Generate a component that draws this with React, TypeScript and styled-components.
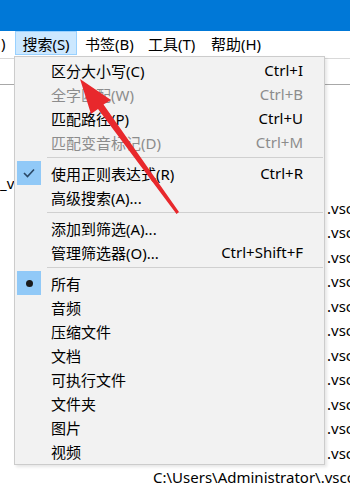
import styled, { createGlobalStyle } from 'styled-components';

const GlobalStyle = createGlobalStyle`
  html, body {
    margin: 0;
    padding: 0;
    background: #ffffff;
    overflow: hidden;
  }
  body {
    font-family: "Noto Sans", "Noto Sans CJK SC", sans-serif;
  }
`;

const Page = styled.div`
  position: relative;
  width: 350px;
  height: 486px;
  overflow: hidden;
  background: #ffffff;
  display: flex;
  flex-direction: column;
`;

const TitleBar = styled.div`
  height: 31px;
  flex-shrink: 0;
  background: #0078d7;
`;

const MenuBar = styled.div`
  height: 24px;
  flex-shrink: 0;
  display: flex;
  align-items: stretch;
  background: #ffffff;
  font-size: 15px;
  color: #000;
`;

const MenuBarItem = styled.div<{ $open?: boolean; $w: number; $pad?: number }>`
  width: ${p => p.$w}px;
  flex-shrink: 0;
  box-sizing: border-box;
  display: flex;
  align-items: center;
  justify-content: ${p => (p.$open ? 'center' : 'flex-start')};
  padding-left: ${p => (p.$open ? 0 : p.$pad ?? 7)}px;
  white-space: nowrap;
  background: ${p => (p.$open ? '#cce8ff' : 'transparent')};
  border: 1px solid ${p => (p.$open ? '#99d1ff' : 'transparent')};
`;

const SearchStrip = styled.div`
  margin-top: 3px;
  height: 25px;
  flex-shrink: 0;
  border-top: 1px solid #d9d9d9;
  border-bottom: 1px solid #a8a8a8;
`;

const List = styled.div`
  padding-top: 86px;
  display: flex;
  flex-direction: column;
`;

const Row = styled.div`
  height: 24.5px;
  display: flex;
  align-items: center;
  font-size: 15px;
  color: #000;
  white-space: nowrap;
`;

const NameCell = styled.div`
  width: 153px;
  flex-shrink: 0;
  overflow: hidden;
`;

const PathCell = styled.div`
  flex: 1;
  overflow: hidden;
  display: flex;
`;

const Hidden = styled.span<{ $w: number }>`
  display: inline-block;
  width: ${p => p.$w}px;
  flex-shrink: 0;
  overflow: hidden;
  clip-path: inset(0 8px 0 0);
`;

const Dropdown = styled.div`
  position: absolute;
  left: 14px;
  top: 56px;
  width: 311px;
  box-sizing: border-box;
  padding: 1px 0 1px 0;
  background: #f2f2f2;
  border: 1px solid #cccccc;
  box-shadow: 2px 2px 3px rgba(0, 0, 0, 0.1);
  font-size: 15px;
  display: flex;
  flex-direction: column;
`;

const Item = styled.div<{ $disabled?: boolean }>`
  height: 24px;
  display: flex;
  align-items: center;
  padding: 0 21px 0 2px;
  color: ${p => (p.$disabled ? '#8c8c8c' : '#000000')};
  white-space: nowrap;
`;

const Mark = styled.div<{ $on?: boolean }>`
  width: 24px;
  height: 24px;
  flex-shrink: 0;
  margin-right: 10px;
  display: flex;
  align-items: center;
  justify-content: center;
  background: ${p => (p.$on ? '#91c9f7' : 'transparent')};
`;

const Dot = styled.span`
  width: 7px;
  height: 7px;
  border-radius: 50%;
  background: #1a1a1a;
`;

const Label = styled.span`
  flex: 1;
`;

const Shortcut = styled.span`
  text-align: right;
`;

const Separator = styled.div`
  height: 7px;
  display: flex;
  align-items: center;
  padding: 0 1px 0 32px;
  &::after {
    content: '';
    flex: 1;
    height: 1px;
    background: #d0d0d0;
  }
`;

const ArrowLayer = styled.svg`
  position: absolute;
  left: 0;
  top: 0;
  pointer-events: none;
`;

type Entry =
  | { sep: true }
  | { sep?: false; label: string; key?: string; disabled?: boolean; mark?: 'check' | 'dot' };

const entries: Entry[] = [
  { label: '区分大小写(C)', key: 'Ctrl+I' },
  { label: '全字匹配(W)', key: 'Ctrl+B', disabled: true },
  { label: '匹配路径(P)', key: 'Ctrl+U' },
  { label: '匹配变音标记(D)', key: 'Ctrl+M', disabled: true },
  { sep: true },
  { label: '使用正则表达式(R)', key: 'Ctrl+R', mark: 'check' },
  { label: '高级搜索(A)...' },
  { sep: true },
  { label: '添加到筛选(A)...' },
  { label: '管理筛选器(O)...', key: 'Ctrl+Shift+F' },
  { sep: true },
  { label: '所有', mark: 'dot' },
  { label: '音频' },
  { label: '压缩文件' },
  { label: '文档' },
  { label: '可执行文件' },
  { label: '文件夹' },
  { label: '图片' },
  { label: '视频' },
];

const rows = Array.from({ length: 11 }, (_, i) => i);

export default function App() {
  return (
    <>
      <GlobalStyle />
      <Page>
        <TitleBar />
        <MenuBar>
          <MenuBarItem $w={15} $pad={0}>
            )
          </MenuBarItem>
          <MenuBarItem $w={62} $open>
            搜索(S)
          </MenuBarItem>
          <MenuBarItem $w={63}>书签(B)</MenuBarItem>
          <MenuBarItem $w={63}>工具(T)</MenuBarItem>
          <MenuBarItem $w={70}>帮助(H)</MenuBarItem>
        </MenuBar>
        <SearchStrip />
        <List>
          <Row>
            <NameCell>_v</NameCell>
          </Row>
          {rows.map(i => (
            <Row key={i}>
              <NameCell />
              <PathCell>
                <Hidden $w={174}>C:\Users\Administrator\AppData</Hidden>
                .vscode
              </PathCell>
            </Row>
          ))}
          <Row>
            <NameCell />
            <PathCell>C:\Users\Administrator\.vscode</PathCell>
          </Row>
        </List>

        <Dropdown>
          {entries.map((e, i) =>
            e.sep ? (
              <Separator key={i} />
            ) : (
              <Item key={i} $disabled={e.disabled}>
                <Mark $on={!!e.mark}>
                  {e.mark === 'dot' && <Dot />}
                  {e.mark === 'check' && (
                    <svg width="14" height="12" viewBox="0 0 14 12">
                      <polyline
                        points="2,6 5.5,9.5 12,2.5"
                        fill="none"
                        stroke="#2a4866"
                        strokeWidth="1.6"
                      />
                    </svg>
                  )}
                </Mark>
                <Label>{e.label}</Label>
                {e.key && <Shortcut>{e.key}</Shortcut>}
              </Item>
            )
          )}
        </Dropdown>

        <ArrowLayer width="350" height="486" viewBox="0 0 350 486">
          <polygon
            points="80,79 111,100 103.5,104.5 179,212 176.5,214 98,109 91,114"
            fill="#e8282c"
          />
        </ArrowLayer>
      </Page>
    </>
  );
}
